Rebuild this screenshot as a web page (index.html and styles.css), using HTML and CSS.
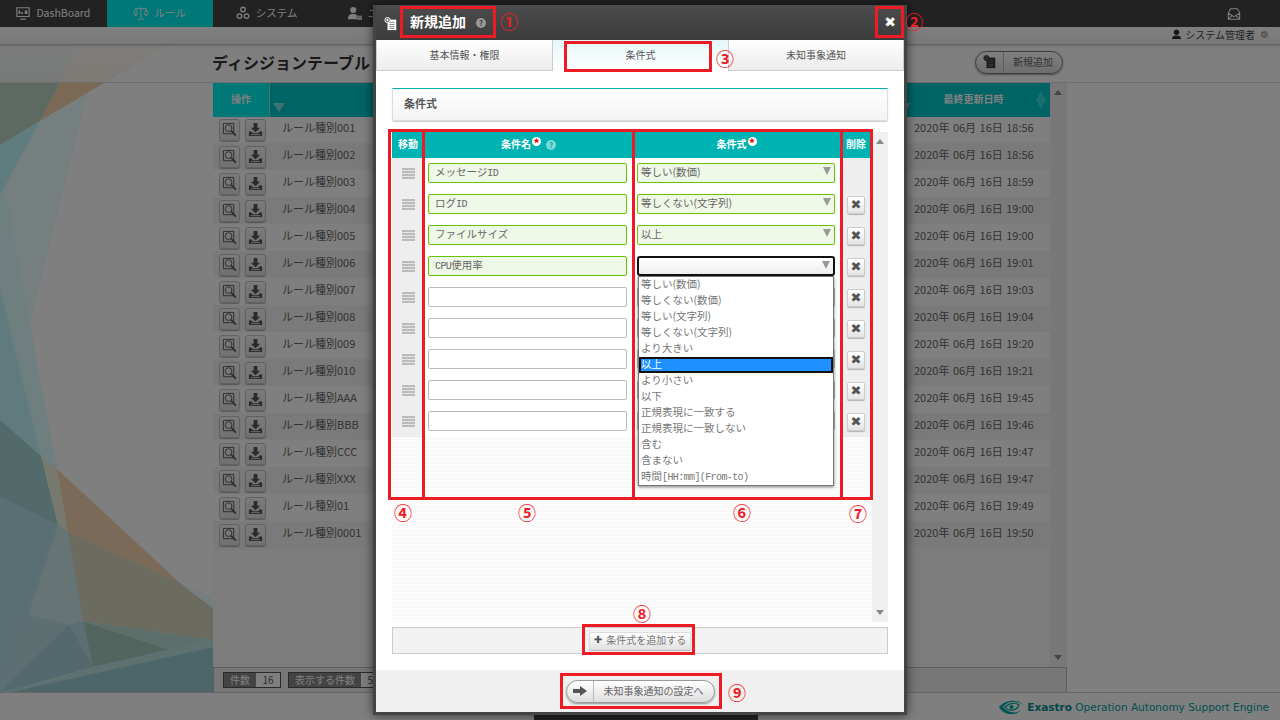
FILE: index.html
```html
<!DOCTYPE html>
<html lang="ja">
<head>
    <meta charset="UTF-8">
    <meta name="viewport" content="width=device-width, initial-scale=1.0">
    <title>ディシジョンテーブル - 新規追加</title>
    <link rel="stylesheet" href="styles.css">
</head>
<body>

    <!-- Shared icons -->
    <svg class="sprite" aria-hidden="true">
        <symbol id="i-view" viewBox="0 0 16 16">
            <path d="M1.5 1.5h11v11h-11z" fill="none" stroke="currentColor" stroke-width="1"/>
            <circle cx="7" cy="6.5" r="3.6" fill="#eee" stroke="currentColor" stroke-width="1"/>
            <path d="M9.8 9.300l5 5.200" stroke="currentColor" stroke-width="1.800"/>
        </symbol>
        <symbol id="i-save" viewBox="0 0 16 16">
            <path d="M6 1h4v5h3l-5 5-5-5h3z" fill="currentColor"/>
            <path d="M1 10h3l1 2h6l1-2h3v5H1z" fill="currentColor"/>
            <path d="M3 13.500h10" stroke="#ddd" stroke-width="1"/>
        </symbol>
        <symbol id="i-note" viewBox="0 0 16 16">
            <path d="M4 3h10v12H4z" fill="currentColor"/>
            <path d="M6 6h6M6 8.500h6M6 11h6M6 13h6" stroke="#777" stroke-width="1"/>
            <circle cx="4" cy="3.500" r="3" fill="#666" stroke="currentColor"/>
            <path d="M2.500 3.500h3M4 2v3" stroke="currentColor"/>
        </symbol>
    </svg>

    <div class="page">

        <!-- Menu -->
        <nav class="menu">
            <a class="menu-item">
                <svg class="menu-icon" viewBox="0 0 16 16"><path d="M1 2h14v10H1zM5 15h6" fill="none" stroke="#fff" stroke-width="1.300"/><path d="M3 9V5h2v4zM6 9V7h2v2zM10 9V5h3v4z" fill="#fff"/></svg>
                DashBoard
            </a>
            <a class="menu-item active">
                <svg class="menu-icon" viewBox="0 0 16 16"><path d="M8 1v13M4 15h8M2 3h12M2 3l-2 6M2 3l2 6M14 3l-2 6M14 3l2 6" fill="none" stroke="#fff"/><path d="M0 9h4a2 2 0 0 1-4 0zM12 9h4a2 2 0 0 1-4 0z" fill="#fff"/></svg>
                ルール
            </a>
            <a class="menu-item">
                <svg class="menu-icon" viewBox="0 0 16 16"><g fill="none" stroke="#fff" stroke-width="1.500"><circle cx="8" cy="4" r="2.600"/><circle cx="4" cy="11.500" r="2.600"/><circle cx="12" cy="11.500" r="2.600"/></g></svg>
                システム
            </a>
            <a class="menu-item">
                <svg class="menu-icon" viewBox="0 0 16 16"><circle cx="6" cy="4.500" r="3.500" fill="#fff"/><path d="M0 15c0-5 2-6 6-6 2 0 3 .3 4 1v5z" fill="#fff"/><path d="M10 11h6v5h-6z" fill="#ccc"/></svg>
                ユーザ
            </a>
            <a class="menu-mail">
                <svg class="menu-icon" viewBox="0 0 16 16"><path d="M1.500 7L4 2h8l2.500 5v7h-13zM1.500 7L8 11l6.500-4M1.500 14L6 9.500M14.500 14L10 9.500" fill="none" stroke="#fff" stroke-width="1.200"/></svg>
            </a>
        </nav>

        <!-- User line -->
        <div class="userbar">
            <svg class="user-icon" viewBox="0 0 12 12"><circle cx="6" cy="3.500" r="3" fill="#333"/><path d="M1 11c0-3 2-4 5-4s5 1 5 4z" fill="#333"/></svg>
            <span>システム管理者</span>
            <span class="user-gear">⚙</span>
        </div>

        <main class="main">
            <svg class="backdrop" viewBox="0 44 213 648" width="213" height="648">
                <polygon points="0,289 58,525 68,532 83,621 93,667 10,692 0,692" fill="#b4dee8"/>
                <polygon points="0,44 80,44 40,121 0,145" fill="#b8d4c4"/>
                <polygon points="80,44 170,44 40,121" fill="#f4d4aa"/>
                <polygon points="105,83 88,92 30,325 57,469 41,456 0,340 0,195 40,121" fill="#eaffff"/>
                <polygon points="40,121 0,195 0,145" fill="#bef8ff"/>
                <polygon points="5,185 30,325 57,469 41,456 0,289 0,195" fill="#deffff"/>
                <polygon points="0,289 41,456 58,525 0,497" fill="#bef6fc"/>
                <polygon points="0,420 41,456 58,525 0,497" fill="#a4d4d4"/>
                <polygon points="41,456 57,469 68,532 58,525" fill="#eef0dc"/>
                <polygon points="57,469 180,583 68,532" fill="#f6d4b0"/>
                <polygon points="68,532 180,583 213,608 213,640 83,621" fill="#d6d6c0"/>
                <polygon points="180,583 213,597 213,608" fill="#ecffff"/>
                <polygon points="0,497 58,525 28,615 0,610" fill="#b4dee8"/>
                <polygon points="58,525 68,532 83,621 69,625 28,615" fill="#cce8ea"/>
                <polygon points="0,610 28,615 0,692" fill="#b4dee8"/>
                <polygon points="28,615 69,625 0,692" fill="#bcdfe4"/>
                <polygon points="69,625 93,667 0,692" fill="#a6d2da"/>
                <polygon points="83,621 213,640 170,650" fill="#badED4"/>
                <polygon points="83,621 170,650 93,667" fill="#a4cabe"/>
                <polygon points="93,667 213,639 213,647 10,692" fill="#bae4e0"/>
                <polygon points="10,692 213,647 213,692" fill="#9accd4"/>
            </svg>

            <!-- Title line -->
            <div class="titlebar">
                <h1 class="page-title">ディシジョンテーブル</h1>
                <button class="pill new-btn">
                    <span class="pill-icon"><svg class="pill-svg" viewBox="0 0 16 16"><use href="#i-note"/></svg></span>
                    <span class="pill-text">新規追加</span>
                </button>
            </div>

            <!-- List of rule types -->
            <section class="list">
                <div class="list-body">
                    <div class="table">
                        <div class="thead">
                            <div class="th-ops">操作</div>
                            <div class="th-name"><span class="funnel"></span></div>
                            <div class="th-when"><span class="funnel funnel-when"></span>最終更新日時<span class="sorter"></span></div>
                        </div>
                        <div class="row"><div class="ops"><button class="op-btn"><svg class="op-icon"><use href="#i-view"/></svg></button><button class="op-btn"><svg class="op-icon"><use href="#i-save"/></svg></button></div><div class="kind">ルール種別001</div><div class="when">2020年 06月 16日 18:56</div></div>
                        <div class="row"><div class="ops"><button class="op-btn"><svg class="op-icon"><use href="#i-view"/></svg></button><button class="op-btn"><svg class="op-icon"><use href="#i-save"/></svg></button></div><div class="kind">ルール種別002</div><div class="when">2020年 06月 16日 18:56</div></div>
                        <div class="row"><div class="ops"><button class="op-btn"><svg class="op-icon"><use href="#i-view"/></svg></button><button class="op-btn"><svg class="op-icon"><use href="#i-save"/></svg></button></div><div class="kind">ルール種別003</div><div class="when">2020年 06月 16日 18:59</div></div>
                        <div class="row"><div class="ops"><button class="op-btn"><svg class="op-icon"><use href="#i-view"/></svg></button><button class="op-btn"><svg class="op-icon"><use href="#i-save"/></svg></button></div><div class="kind">ルール種別004</div><div class="when">2020年 06月 16日 19:00</div></div>
                        <div class="row"><div class="ops"><button class="op-btn"><svg class="op-icon"><use href="#i-view"/></svg></button><button class="op-btn"><svg class="op-icon"><use href="#i-save"/></svg></button></div><div class="kind">ルール種別005</div><div class="when">2020年 06月 16日 19:00</div></div>
                        <div class="row"><div class="ops"><button class="op-btn"><svg class="op-icon"><use href="#i-view"/></svg></button><button class="op-btn"><svg class="op-icon"><use href="#i-save"/></svg></button></div><div class="kind">ルール種別006</div><div class="when">2020年 06月 16日 19:01</div></div>
                        <div class="row"><div class="ops"><button class="op-btn"><svg class="op-icon"><use href="#i-view"/></svg></button><button class="op-btn"><svg class="op-icon"><use href="#i-save"/></svg></button></div><div class="kind">ルール種別007</div><div class="when">2020年 06月 16日 19:03</div></div>
                        <div class="row"><div class="ops"><button class="op-btn"><svg class="op-icon"><use href="#i-view"/></svg></button><button class="op-btn"><svg class="op-icon"><use href="#i-save"/></svg></button></div><div class="kind">ルール種別008</div><div class="when">2020年 06月 16日 19:04</div></div>
                        <div class="row"><div class="ops"><button class="op-btn"><svg class="op-icon"><use href="#i-view"/></svg></button><button class="op-btn"><svg class="op-icon"><use href="#i-save"/></svg></button></div><div class="kind">ルール種別009</div><div class="when">2020年 06月 16日 19:20</div></div>
                        <div class="row"><div class="ops"><button class="op-btn"><svg class="op-icon"><use href="#i-view"/></svg></button><button class="op-btn"><svg class="op-icon"><use href="#i-save"/></svg></button></div><div class="kind">ルール種別010</div><div class="when">2020年 06月 16日 19:21</div></div>
                        <div class="row"><div class="ops"><button class="op-btn"><svg class="op-icon"><use href="#i-view"/></svg></button><button class="op-btn"><svg class="op-icon"><use href="#i-save"/></svg></button></div><div class="kind">ルール種別AAA</div><div class="when">2020年 06月 16日 19:45</div></div>
                        <div class="row"><div class="ops"><button class="op-btn"><svg class="op-icon"><use href="#i-view"/></svg></button><button class="op-btn"><svg class="op-icon"><use href="#i-save"/></svg></button></div><div class="kind">ルール種別BBB</div><div class="when">2020年 06月 16日 19:46</div></div>
                        <div class="row"><div class="ops"><button class="op-btn"><svg class="op-icon"><use href="#i-view"/></svg></button><button class="op-btn"><svg class="op-icon"><use href="#i-save"/></svg></button></div><div class="kind">ルール種別CCC</div><div class="when">2020年 06月 16日 19:47</div></div>
                        <div class="row"><div class="ops"><button class="op-btn"><svg class="op-icon"><use href="#i-view"/></svg></button><button class="op-btn"><svg class="op-icon"><use href="#i-save"/></svg></button></div><div class="kind">ルール種別XXX</div><div class="when">2020年 06月 16日 19:47</div></div>
                        <div class="row"><div class="ops"><button class="op-btn"><svg class="op-icon"><use href="#i-view"/></svg></button><button class="op-btn"><svg class="op-icon"><use href="#i-save"/></svg></button></div><div class="kind">ルール種別01</div><div class="when">2020年 06月 16日 19:49</div></div>
                        <div class="row"><div class="ops"><button class="op-btn"><svg class="op-icon"><use href="#i-view"/></svg></button><button class="op-btn"><svg class="op-icon"><use href="#i-save"/></svg></button></div><div class="kind">ルール種別0001</div><div class="when">2020年 06月 16日 19:50</div></div>
                    </div>
                    <div class="scrollbar list-scroll"><span class="arrow-up"></span><span class="arrow-down"></span></div>
                </div>
                <div class="list-foot">
                    <span class="count"><span class="count-label">件数</span><span class="count-value">16</span></span>
                    <span class="count"><span class="count-label">表示する件数</span><span class="count-value">50</span></span>
                </div>
            </section>
        </main>

        <footer class="footer">
            <svg class="brand-logo" viewBox="0 0 24 18"><path d="M0 9C5 2 19 0 24 7 18 2 8 3 4 9c5 6 13 7 18 3-5 6-17 6-22-3z" fill="#00a8a8"/><path d="M6 9c4-4 10-5 14-2-2 6-10 7-14 2z" fill="none" stroke="#00a8a8" stroke-width="1.200"/><circle cx="12.500" cy="9" r="2" fill="#00a8a8"/></svg>
            <span class="brand"><b class="brand-name">Exastro</b> Operation Autonomy Support Engine</span>
        </footer>
    </div>

    <!-- Dimmed layer and dialog -->
    <div class="overlay"></div>
    <div class="under-strip"></div>

    <div class="modal">
        <div class="modal-head">
            <svg class="modal-icon" viewBox="0 0 16 16"><use href="#i-note"/></svg>
            <span class="modal-title">新規追加</span>
            <span class="help help-dark">?</span>
            <span class="modal-close">✖</span>
        </div>

        <div class="tabs">
            <div class="tab">基本情報・権限</div>
            <div class="tab active">条件式</div>
            <div class="tab">未知事象通知</div>
        </div>

        <div class="modal-body">
            <h2 class="section-title">条件式</h2>

            <div class="cond-wrap">
                <div class="cond-table">
                    <div class="cond-head">
                        <div>移動</div>
                        <div>条件名<span class="req">*</span><span class="help help-teal">?</span></div>
                        <div>条件式<span class="req">*</span></div>
                        <div>削除</div>
                    </div>

                    <div class="cond-row">
                        <div class="cell-move"><span class="handle"></span></div>
                        <div class="cell-name"><div class="field ok">メッセージ<span class="latin">ID</span></div></div>
                        <div class="cell-expr"><div class="sel ok">等しい(数価)</div></div>
                        <div class="cell-del"></div>
                    </div>
                    <div class="cond-row">
                        <div class="cell-move"><span class="handle"></span></div>
                        <div class="cell-name"><div class="field ok">ログ<span class="latin">ID</span></div></div>
                        <div class="cell-expr"><div class="sel ok">等しくない(文字列)</div></div>
                        <div class="cell-del"><button class="del-btn">✖</button></div>
                    </div>
                    <div class="cond-row">
                        <div class="cell-move"><span class="handle"></span></div>
                        <div class="cell-name"><div class="field ok">ファイルサイズ</div></div>
                        <div class="cell-expr"><div class="sel ok">以上</div></div>
                        <div class="cell-del"><button class="del-btn">✖</button></div>
                    </div>
                    <div class="cond-row">
                        <div class="cell-move"><span class="handle"></span></div>
                        <div class="cell-name"><div class="field ok"><span class="latin">CPU</span>使用率</div></div>
                        <div class="cell-expr"><div class="sel open"></div></div>
                        <div class="cell-del"><button class="del-btn">✖</button></div>
                    </div>
                    <div class="cond-row">
                        <div class="cell-move"><span class="handle"></span></div>
                        <div class="cell-name"><div class="field"></div></div>
                        <div class="cell-expr"><div class="sel"></div></div>
                        <div class="cell-del"><button class="del-btn">✖</button></div>
                    </div>
                    <div class="cond-row">
                        <div class="cell-move"><span class="handle"></span></div>
                        <div class="cell-name"><div class="field"></div></div>
                        <div class="cell-expr"><div class="sel"></div></div>
                        <div class="cell-del"><button class="del-btn">✖</button></div>
                    </div>
                    <div class="cond-row">
                        <div class="cell-move"><span class="handle"></span></div>
                        <div class="cell-name"><div class="field"></div></div>
                        <div class="cell-expr"><div class="sel"></div></div>
                        <div class="cell-del"><button class="del-btn">✖</button></div>
                    </div>
                    <div class="cond-row">
                        <div class="cell-move"><span class="handle"></span></div>
                        <div class="cell-name"><div class="field"></div></div>
                        <div class="cell-expr"><div class="sel"></div></div>
                        <div class="cell-del"><button class="del-btn">✖</button></div>
                    </div>
                    <div class="cond-row">
                        <div class="cell-move"><span class="handle"></span></div>
                        <div class="cell-name"><div class="field"></div></div>
                        <div class="cell-expr"><div class="sel"></div></div>
                        <div class="cell-del"><button class="del-btn">✖</button></div>
                    </div>
                </div>
                <div class="scrollbar cond-scroll"><span class="arrow-up"></span><span class="arrow-down"></span></div>
            </div>

            <div class="add-bar">
                <button class="add-btn"><span class="add-plus">✚</span>条件式を追加する</button>
            </div>
        </div>

        <div class="modal-foot">
            <button class="pill next-btn">
                <span class="pill-icon next-icon"><svg class="next-arrow" viewBox="0 0 14 10"><path d="M0 3h7V0l7 5-7 5V7H0z" fill="#555"/></svg></span>
                <span class="pill-text">未知事象通知の設定へ</span>
            </button>
        </div>
    </div>

    <!-- Open select list -->
    <ul class="options">
        <li>等しい(数価)</li>
        <li>等しくない(数価)</li>
        <li>等しい(文字列)</li>
        <li>等しくない(文字列)</li>
        <li>より大きい</li>
        <li class="picked">以上</li>
        <li>より小さい</li>
        <li>以下</li>
        <li>正規表現に一致する</li>
        <li>正規表現に一致しない</li>
        <li>含む</li>
        <li>含まない</li>
        <li>時間<span class="latin">[HH:mm](From-to)</span></li>
    </ul>

    <!-- Red callouts -->
    <div class="mark mark-1"></div>
    <div class="mark mark-2"></div>
    <div class="mark mark-3"></div>
    <div class="mark mark-4"></div>
    <div class="mark mark-5"></div>
    <div class="mark mark-6"></div>
    <div class="mark mark-7"></div>
    <div class="mark mark-8"></div>
    <div class="mark mark-9"></div>
    <span class="num num-1">①</span>
    <span class="num num-2">②</span>
    <span class="num num-3">③</span>
    <span class="num num-4">④</span>
    <span class="num num-5">⑤</span>
    <span class="num num-6">⑥</span>
    <span class="num num-7">⑦</span>
    <span class="num num-8">⑧</span>
    <span class="num num-9">⑨</span>

</body>
</html>
```

FILE: styles.css
```css
/* General Page Styling */
* {
    box-sizing: border-box;
}

body {
    margin: 0;
    width: 1280px;
    height: 720px;
    overflow: hidden;
    background: #fff;
    color: #555;
    font-family: "Noto Sans CJK JP", "Noto Sans", sans-serif;
    font-size: 11px;
}

button {
    font-family: inherit;
    padding: 0;
}

.sprite {
    display: none;
}

.latin {
    font-family: "Liberation Mono", monospace;
    font-size: 10px;
    letter-spacing: -0.6px;
}

.page {
    display: flex;
    flex-direction: column;
    height: 720px;
}

/* Menu */
.menu {
    display: flex;
    flex: none;
    height: 27px;
    background: #444;
    color: #fff;
}

.menu-item {
    display: flex;
    align-items: center;
    justify-content: center;
    gap: 6px;
    width: 106.67px;
    padding-bottom: 2px;
    font-size: 10.5px;
}

.menu-item.active {
    background: #00f0f0;
}

.menu-icon {
    width: 14px;
    height: 14px;
    flex: none;
}

.menu-mail {
    display: flex;
    align-items: center;
    margin-left: auto;
    padding-right: 39px;
}

/* User line */
.userbar {
    display: flex;
    flex: none;
    align-items: center;
    justify-content: flex-end;
    gap: 3px;
    height: 17px;
    padding: 0 11px 2px 0;
    background: linear-gradient(#fff, #f2f2f2);
    color: #444;
    font-size: 10px;
}

.user-icon {
    width: 11px;
    height: 11px;
}

.user-gear {
    margin-left: 2px;
    font-family: "DejaVu Sans", sans-serif;
    color: #888;
}

/* Main area */
.main {
    position: relative;
    flex: 1;
    display: flex;
    flex-direction: column;
    min-height: 0;
}

.backdrop {
    position: absolute;
    top: 0;
    left: 0;
}

.titlebar {
    position: relative;
    display: flex;
    flex: none;
    align-items: center;
    justify-content: space-between;
    height: 39px;
    padding: 0 217px 2px 212px;
    background: linear-gradient(rgba(255, 255, 255, 0.9), rgba(255, 255, 255, 0.75));
    border-bottom: 1px solid #ddd;
    box-shadow: inset 0 4px 3px -3px rgba(0, 0, 0, 0.35);
}

.page-title {
    margin: 0 0 1px;
    font-size: 16px;
    color: #333;
    white-space: nowrap;
}

/* Pill button */
.pill {
    display: flex;
    align-items: stretch;
    border: 1px solid #777;
    border-radius: 12px;
    background: linear-gradient(#fff, #ddd);
    color: #666;
    box-shadow: 0 1px 2px rgba(0, 0, 0, 0.4);
}

.pill-icon {
    display: flex;
    align-items: center;
    justify-content: center;
    border-right: 1px solid #bbb;
}

.pill-text {
    display: flex;
    align-items: center;
    justify-content: center;
    flex: 1;
    padding-bottom: 2px;
    font-size: 10px;
}

.new-btn {
    width: 88px;
    height: 23px;
}

.new-btn .pill-icon {
    width: 28px;
    color: #333;
}

.pill-svg {
    width: 14px;
    height: 14px;
}

/* List */
.list {
    position: relative;
    flex: 1;
    display: flex;
    flex-direction: column;
    width: 854px;
    margin-left: 213px;
    min-height: 0;
    background: repeating-linear-gradient(#fff 0, #fff 1px, #f2f2f2 1px, #f2f2f2 2px);
}

.list-body {
    flex: 1;
    display: flex;
    min-height: 0;
}

.table {
    width: 837px;
}

.thead {
    position: relative;
    display: grid;
    grid-template-columns: 57px 1fr 153px;
    height: 34px;
    margin-bottom: -1px;
    background: #00c8c8;
    color: #fff;
    font-size: 10px;
    font-weight: bold;
}

.th-ops {
    display: flex;
    align-items: center;
    justify-content: center;
    padding-bottom: 3px;
    background: #00f0f0;
    border-right: 1px solid #9fdede;
}

.th-name {
    display: flex;
    align-items: flex-end;
    padding: 0 0 5px 3px;
}

.th-when {
    position: relative;
    display: flex;
    align-items: center;
    justify-content: center;
    padding-bottom: 3px;
}

.funnel {
    width: 0;
    height: 0;
    border-left: 6px solid transparent;
    border-right: 6px solid transparent;
    border-top: 9px solid #7fe6e6;
}

.funnel-when {
    position: absolute;
    left: 2px;
    bottom: 5px;
}

.sorter {
    position: absolute;
    right: 4px;
    top: 8px;
    display: flex;
    flex-direction: column;
}

.sorter::before,
.sorter::after {
    content: "";
    width: 0;
    height: 0;
    border-left: 5px solid transparent;
    border-right: 5px solid transparent;
}

.sorter::before {
    border-bottom: 9px solid #33dede;
}

.sorter::after {
    border-top: 9px solid #33dede;
}

.row {
    display: grid;
    grid-template-columns: 57px 1fr 153px;
    align-items: center;
    height: 27px;
    background: #fff;
    color: #666;
}

.row:nth-child(odd) {
    background: #f4f4f4;
}

.ops {
    display: flex;
    gap: 5px;
    padding-left: 6px;
}

.op-btn {
    display: flex;
    align-items: center;
    justify-content: center;
    width: 21px;
    height: 22px;
    border: 1px solid #c4c4c4;
    border-radius: 3px;
    background: linear-gradient(#f6f6f6, #e2e2e2);
    color: #555;
    box-shadow: 0 1px 1px rgba(0, 0, 0, 0.3);
}

.op-icon {
    width: 15px;
    height: 15px;
}

.kind {
    padding: 0 0 5px 12px;
}

.when {
    padding: 0 0 5px 17px;
    word-spacing: 1px;
    white-space: nowrap;
}

.scrollbar {
    position: relative;
    flex: none;
    background: #f0f0f0;
}

.list-scroll {
    width: 17px;
}

.arrow-up,
.arrow-down {
    position: absolute;
    left: 4px;
    width: 0;
    height: 0;
    border-left: 4px solid transparent;
    border-right: 4px solid transparent;
}

.arrow-up {
    top: 7px;
    border-bottom: 5px solid #888;
}

.arrow-down {
    bottom: 7px;
    border-top: 5px solid #888;
}

.list-foot {
    display: flex;
    flex: none;
    align-items: center;
    gap: 7px;
    height: 25px;
    padding-left: 9px;
    background: #eee;
    border: 1px solid #bbb;
    border-width: 1px 1px 0 1px;
}

.count {
    display: flex;
    height: 16px;
    border: 1px solid #555;
    line-height: 13px;
    font-size: 10px;
}

.count-label {
    padding: 0 6px;
    background: #888;
    color: #fff;
}

.count-value {
    width: 24px;
    text-align: center;
    background: #fff;
}

/* Footer */
.footer {
    display: flex;
    flex: none;
    align-items: center;
    justify-content: flex-end;
    gap: 4px;
    height: 28px;
    padding-right: 11px;
    background: #fff;
    border-top: 1px solid #ccc;
}

.brand-logo {
    width: 24px;
    height: 18px;
}

.brand {
    font-family: "DejaVu Sans", sans-serif;
    font-size: 10.5px;
    color: #009fa8;
}

.brand-name {
    color: #008f8f;
}

/* Dimmed layer */
.overlay {
    position: absolute;
    top: 0;
    left: 0;
    width: 1280px;
    height: 720px;
    background: rgba(0, 0, 0, 0.5);
}

.under-strip {
    position: absolute;
    top: 713px;
    left: 534px;
    width: 224px;
    height: 7px;
    background: #222;
}

/* Dialog */
.modal {
    position: absolute;
    top: 5px;
    left: 373px;
    display: flex;
    flex-direction: column;
    width: 534px;
    height: 710px;
    border: 3px solid #444;
    border-top: 0;
    background: #fff;
    box-shadow: 0 0 10px rgba(0, 0, 0, 0.6);
}

.modal-head {
    display: flex;
    flex: none;
    align-items: center;
    height: 35px;
    padding: 0 0 4px 8px;
    background: linear-gradient(#4c4c4c, #3c3c3c);
    color: #fff;
}

.modal-icon {
    width: 14px;
    height: 14px;
    margin-top: 6px;
}

.modal-title {
    margin-left: 12px;
    font-size: 14px;
    font-weight: bold;
}

.help {
    display: inline-block;
    width: 10px;
    height: 10px;
    border-radius: 50%;
    text-align: center;
    font-size: 8px;
    font-weight: bold;
    line-height: 10px;
}

.help-dark {
    margin: 4px 0 0 10px;
    background: #999;
    color: #444;
}

.help-teal {
    margin: 2px 0 0 5px;
    background: #7fd9d9;
    color: #00b3b3;
}

.modal-close {
    margin: 2px 8px 0 auto;
    font-family: "DejaVu Sans", sans-serif;
    font-size: 14px;
    font-weight: bold;
}

.tabs {
    display: grid;
    flex: none;
    grid-template-columns: 177px 175px 176px;
    height: 31px;
}

.tab {
    display: flex;
    align-items: center;
    justify-content: center;
    padding-bottom: 2px;
    background: linear-gradient(#fff, #ececec);
    border: 1px solid #ccc;
    border-top: 0;
    font-size: 10px;
}

.tab.active {
    background: linear-gradient(#e4f7f8, #fff);
    border: 0;
}

.modal-body {
    flex: 1;
    padding: 17px 16px 0;
    min-height: 0;
}

.section-title {
    display: flex;
    align-items: center;
    height: 33px;
    margin: 0 0 11px;
    padding: 0 0 3px 11px;
    background: linear-gradient(#fff, #f4f4f4);
    border: 1px solid #ddd;
    border-top: 1px solid #00b3b3;
    border-radius: 0 0 2px 2px;
    box-shadow: 0 1px 1px rgba(0, 0, 0, 0.2);
    font-size: 11px;
}

/* Condition table */
.cond-wrap {
    display: flex;
    height: 490px;
}

.cond-table {
    width: 480px;
    background: repeating-linear-gradient(#fff 0, #fff 1px, #f7f7f7 1px, #f7f7f7 2px);
}

.cond-head,
.cond-row {
    display: grid;
    grid-template-columns: 32px 209px 207px 32px;
}

.cond-head {
    height: 26px;
    background: #00b3b3;
    color: #fff;
    font-size: 10px;
    font-weight: bold;
}

.cond-head div {
    display: flex;
    align-items: center;
    justify-content: center;
    padding-bottom: 3px;
}

.req {
    width: 9px;
    height: 9px;
    margin: -5px 0 0 1px;
    border-radius: 50%;
    background: #fff;
    color: #e00;
    text-align: center;
    font-size: 12px;
    line-height: 12px;
}

.cond-row {
    height: 31px;
}

.cell-move,
.cell-del {
    display: flex;
    align-items: center;
    justify-content: center;
    background: #eee;
}

.cell-name,
.cell-expr {
    background: #fff;
    padding: 5px 0 0 4px;
}

.handle {
    width: 13px;
    height: 11px;
    background: repeating-linear-gradient(#bbb 0, #bbb 2px, #e4e4e4 2px, #e4e4e4 3px);
}

.field,
.sel {
    position: relative;
    height: 20px;
    border: 1px solid #bbb;
    border-radius: 2px;
    background: #fff;
    line-height: 16px;
    font-size: 10.500px;
    color: #666;
}

.field {
    width: 199px;
    padding-left: 6px;
}

.sel {
    width: 198px;
    padding-left: 3px;
}

.field.ok,
.sel.ok {
    border-color: #66c400;
    background: #eef8e6;
}

.sel::after {
    content: "";
    position: absolute;
    top: 3px;
    right: 3px;
    border-left: 4px solid transparent;
    border-right: 4px solid transparent;
    border-top: 8px solid #999;
}

.sel.open {
    border: 2px solid #111;
    border-radius: 3px;
    background: linear-gradient(#fff, #eee);
}

.del-btn {
    display: flex;
    align-items: center;
    justify-content: center;
    width: 18px;
    height: 18px;
    border: 1px solid #ccc;
    border-radius: 2px;
    background: linear-gradient(#fff, #e4e4e4);
    color: #555;
    font-family: "DejaVu Sans", sans-serif;
    font-size: 13px;
    box-shadow: 0 1px 1px rgba(0, 0, 0, 0.25);
}

.cond-scroll {
    width: 16px;
}

.add-bar {
    display: flex;
    align-items: center;
    justify-content: center;
    height: 27px;
    margin-top: 5px;
    background: #f2f2f2;
    border: 1px solid #ccc;
}

.add-btn {
    display: flex;
    align-items: center;
    justify-content: center;
    gap: 4px;
    width: 102px;
    height: 18px;
    padding-bottom: 2px;
    border: 1px solid #ddd;
    border-radius: 2px;
    background: linear-gradient(#fff, #e2e2e2);
    color: #777;
    font-size: 10px;
    box-shadow: 0 1px 1px rgba(0, 0, 0, 0.25);
}

.add-plus {
    font-family: "DejaVu Sans", sans-serif;
    font-size: 10px;
    color: #555;
}

.modal-foot {
    display: flex;
    flex: none;
    align-items: center;
    justify-content: center;
    height: 42px;
    background: #f0f0f0;
}

.next-btn {
    width: 149px;
    height: 23px;
    border-color: #999;
}

.next-icon {
    width: 27px;
}

.next-arrow {
    align-self: center;
    width: 14px;
    height: 10px;
}

/* Open select list */
.options {
    position: absolute;
    top: 276px;
    left: 638px;
    width: 196px;
    height: 210px;
    margin: 0;
    padding: 0;
    list-style: none;
    background: #fff;
    border: 1px solid #777;
    box-shadow: 0 1px 3px rgba(0, 0, 0, 0.5);
    font-size: 10.500px;
    color: #777;
}

.options li {
    height: 16px;
    padding-left: 2px;
    line-height: 14px;
    white-space: nowrap;
}

.options .picked {
    background: #1e90ff;
    color: #fff;
    outline: 2px solid #111;
    outline-offset: -2px;
}

/* Red callouts */
.mark {
    position: absolute;
    border: 3px solid #ed1c24;
}

.mark-1 { left: 400px; top: 6px; width: 96px; height: 32px; }
.mark-2 { left: 875px; top: 6px; width: 29px; height: 32px; }
.mark-3 { left: 564px; top: 41px; width: 148px; height: 31px; }
.mark-4 { left: 388px; top: 129px; width: 37px; height: 371px; }
.mark-5 { left: 422px; top: 129px; width: 213px; height: 371px; }
.mark-6 { left: 632px; top: 129px; width: 211px; height: 371px; }
.mark-7 { left: 840px; top: 129px; width: 33px; height: 371px; }
.mark-8 { left: 582px; top: 624px; width: 113px; height: 31px; }
.mark-9 { left: 560px; top: 673px; width: 162px; height: 36px; }

.num {
    position: absolute;
    width: 18px;
    height: 18px;
    color: #ed1c24;
    font-size: 18px;
    font-weight: bold;
    line-height: 18px;
    text-align: center;
}

.num-1 { left: 500px; top: 12px; }
.num-2 { left: 905px; top: 12px; }
.num-3 { left: 716px; top: 49px; }
.num-4 { left: 394px; top: 503px; }
.num-5 { left: 518px; top: 503px; }
.num-6 { left: 733px; top: 503px; }
.num-7 { left: 849px; top: 504px; }
.num-8 { left: 633px; top: 604px; }
.num-9 { left: 728px; top: 683px; }
```
